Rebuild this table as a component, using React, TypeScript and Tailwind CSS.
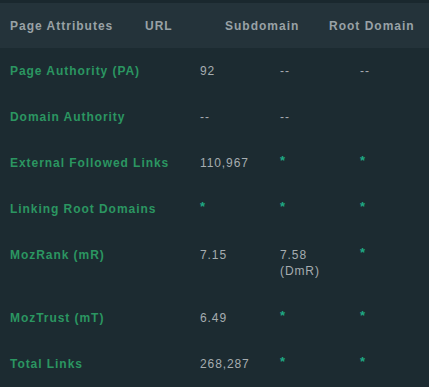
const rows: { label: string; url: string[]; sub: string[]; root: string[] }[] = [
  { label: "Page Authority (PA)", url: ["92"], sub: ["--"], root: ["--"] },
  { label: "Domain Authority", url: ["--"], sub: ["--"], root: [] },
  { label: "External Followed Links", url: ["110,967"], sub: ["*"], root: ["*"] },
  { label: "Linking Root Domains", url: ["*"], sub: ["*"], root: ["*"] },
  { label: "MozRank (mR)", url: ["7.15"], sub: ["7.58", "(DmR)"], root: ["*"] },
  { label: "MozTrust (mT)", url: ["6.49"], sub: ["*"], root: ["*"] },
  { label: "Total Links", url: ["268,287"], sub: ["*"], root: ["*"] },
]

function Cell({ lines, className }: { lines: string[]; className: string }) {
  return (
    <div className={className + (lines.length > 1 ? " pb-[1px]" : "")}>
      {lines.map((l, i) =>
        l === "*" ? (
          <span key={i} className="block text-[13px] font-bold leading-[12px] text-[#1fa884]">
            *
          </span>
        ) : (
          <div key={i} className="leading-[16px]">
            {l}
          </div>
        )
      )}
    </div>
  )
}

export default function App() {
  return (
    <div
      className="w-[429px] h-[387px] bg-[#1c2b31] overflow-hidden"
      style={{ fontFamily: '"Liberation Sans", Arial, sans-serif' }}
    >
      {/* top strip */}
      <div className="h-[3px] bg-[#1a282e]" />

      {/* Header */}
      <div className="h-[45px] bg-[#24333a] flex items-center pl-[10px] text-[12px] font-bold tracking-[1px] text-[#99a2a6]">
        <div className="w-[135px]">Page Attributes</div>
        <div className="w-[80px]">URL</div>
        <div className="w-[104px]">Subdomain</div>
        <div>Root Domain</div>
      </div>

      {/* Rows */}
      <div className="text-[12px]">
        {rows.map((r) => (
          <div key={r.label} className="flex pl-[10px] pt-[15px] pb-[15px]">
            <div className="w-[190px] font-bold leading-[16px] tracking-[0.95px] text-[#2b9661]">
              {r.label}
            </div>
            <Cell lines={r.url} className="w-[80px] tracking-[0.9px] text-[#a6adb0]" />
            <Cell lines={r.sub} className="w-[80px] tracking-[0.9px] text-[#a6adb0]" />
            <Cell lines={r.root} className="w-[60px] tracking-[0.9px] text-[#a6adb0]" />
          </div>
        ))}
      </div>
    </div>
  )
}
